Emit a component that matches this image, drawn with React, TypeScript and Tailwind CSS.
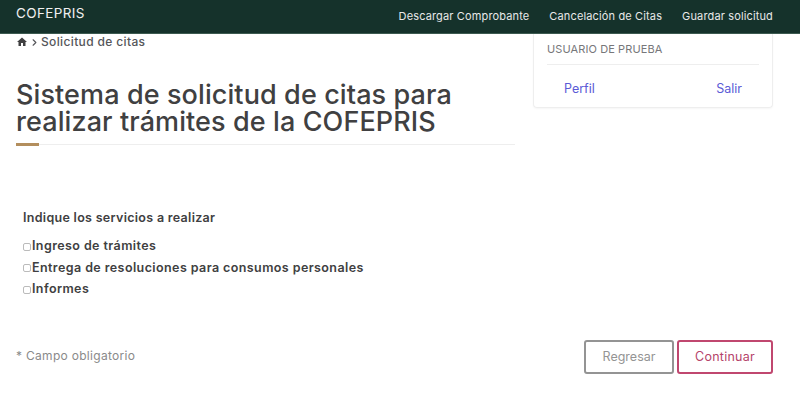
import { ChevronRight } from "lucide-react";

const NAV_LINKS = ["Descargar Comprobante", "Cancelación de Citas", "Guardar solicitud"];
const SERVICES = [
  "Ingreso de trámites",
  "Entrega de resoluciones para consumos personales",
  "Informes",
];

export default function App() {
  return (
    <div className="h-[401px] w-[800px] overflow-hidden bg-white font-['Inter',sans-serif] text-[#404041]">
      <header className="flex h-[34px] items-start justify-between border-b border-[#3c5a50] bg-[#15322b] pr-[27px] pl-4 text-white">
        <span className="mt-[3px] text-[13.5px] leading-5 tracking-[0.35px] text-[#f0f0f0]">COFEPRIS</span>
        <nav className="mt-[6px] flex gap-5 text-[11px] leading-[20px] tracking-[0.14px] text-[#e8e8e8]">
          {NAV_LINKS.map((link) => (
            <a key={link}>{link}</a>
          ))}
        </nav>
      </header>

      <div className="flex pr-[27px] pl-4">
        <main className="w-[499px]">
          <div className="flex h-4 items-center text-[#55565a]">
            <svg viewBox="0 0 24 24" className="size-[12px]" fill="#404041">
              <path d="M10 20v-6h4v6h5v-8h3L12 3 2 12h3v8z" />
            </svg>
            <ChevronRight className="ml-[1px] size-[11px]" strokeWidth={2.5} />
            <span className="ml-[1px] text-[12px] font-medium tracking-[0.36px]">Solicitud de citas</span>
          </div>
          <h1 className="mt-[31px] text-[27px] leading-[27px] font-medium tracking-[0.1px] text-[#404041]">
            Sistema de solicitud de citas para
            <br />
            realizar trámites de la COFEPRIS
          </h1>
          <div className="relative mt-[9px] h-px bg-[#eeeeee]">
            <div className="absolute top-[-1px] left-0 h-[3px] w-[23px] bg-[#b38e5d]" />
          </div>

          <section className="mt-[65px] pl-[7px]">
            <p className="text-[12.5px] leading-4 font-semibold tracking-[0.3px]">Indique los servicios a realizar</p>
            <ul className="mt-[10px] flex flex-col">
              {SERVICES.map((service) => (
                <li key={service} className="flex h-[21.5px] items-center text-[12.5px] font-semibold tracking-[0.41px]">
                  <span className="mr-[1px] size-[8px] rounded-[2px] border border-[#bbbbbb]" />
                  {service}
                </li>
              ))}
            </ul>
          </section>

          <p className="mt-[47px] text-[12px] leading-4 tracking-[0.3px] text-[#8a8a8a]">* Campo obligatorio</p>
        </main>

        <aside className="ml-[18px] flex-1">
          <div className="h-[74px] rounded-b border border-t-0 border-[#eeeeee] px-[13px] pt-[8px] shadow-[0_1px_2px_rgba(0,0,0,0.04)]">
            <p className="border-b border-[#eeeeee] pb-[8px] text-[11px] leading-[14px] tracking-[0.1px] text-[#77777a]">
              USUARIO DE PRUEBA
            </p>
            <div className="mt-[16px] flex justify-between px-[17px] text-[12.5px] leading-4 text-[#5b5bd6]">
              <a>Perfil</a>
              <a>Salir</a>
            </div>
          </div>
          <div className="mt-[232px] flex justify-end gap-[3px]">
            <button className="h-[34px] w-[90px] rounded-[3px] border-2 border-[#949494] text-[12.5px] text-[#949494]">
              Regresar
            </button>
            <button className="h-[34px] w-[96px] rounded-[3px] border-2 border-[#c0476f] text-[12.5px] tracking-[0.25px] text-[#b5436a]">
              Continuar
            </button>
          </div>
        </aside>
      </div>
    </div>
  );
}
